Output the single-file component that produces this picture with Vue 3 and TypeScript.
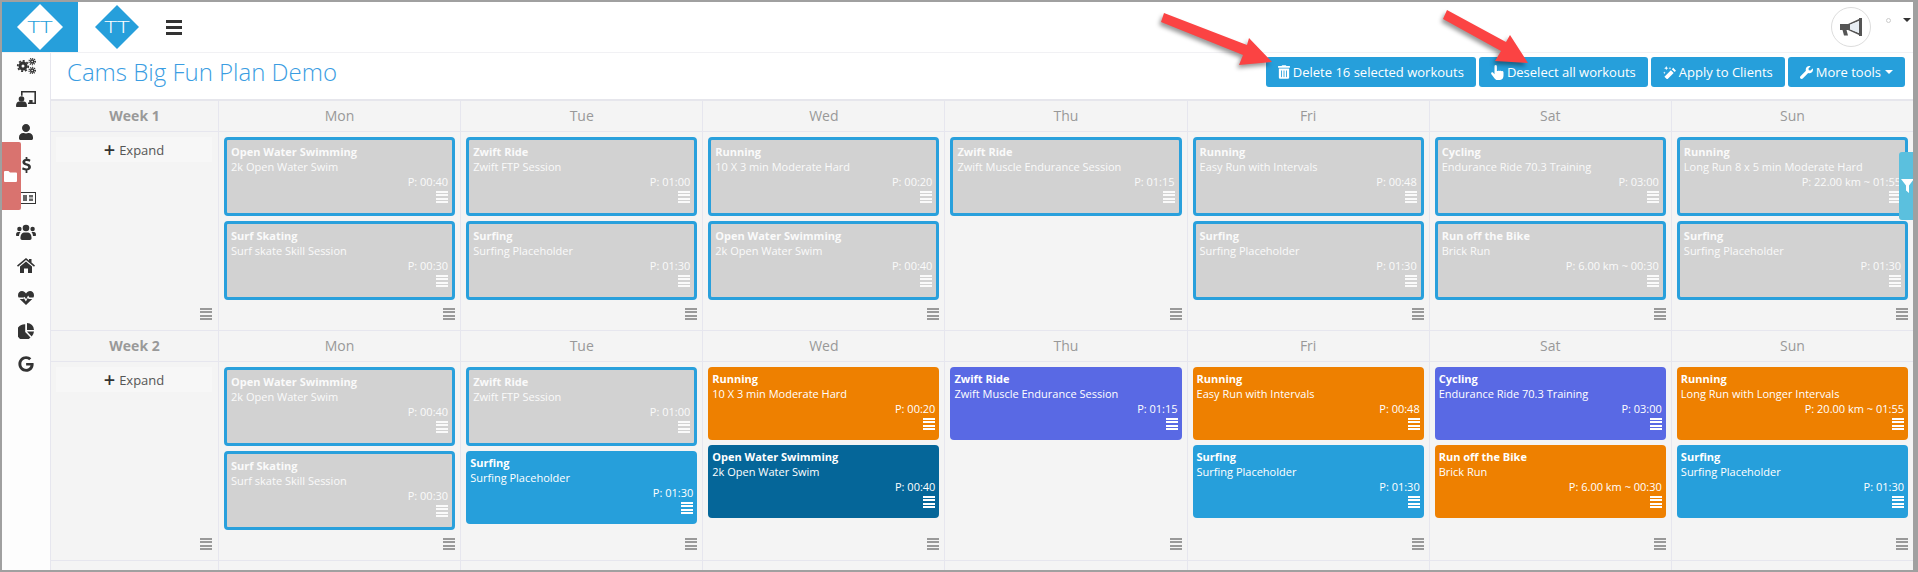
<script setup lang="ts">
type Kind = 'sel' | 'run' | 'ride' | 'surf' | 'swim'
interface Workout { title: string; sub: string; plan: string }

const ows: Workout = { title: 'Open Water Swimming', sub: '2k Open Water Swim', plan: 'P: 00:40' }
const skate: Workout = { title: 'Surf Skating', sub: 'Surf skate Skill Session', plan: 'P: 00:30' }
const ftp: Workout = { title: 'Zwift Ride', sub: 'Zwift FTP Session', plan: 'P: 01:00' }
const surf: Workout = { title: 'Surfing', sub: 'Surfing Placeholder', plan: 'P: 01:30' }
const tenBy3: Workout = { title: 'Running', sub: '10 X 3 min Moderate Hard', plan: 'P: 00:20' }
const muscle: Workout = { title: 'Zwift Ride', sub: 'Zwift Muscle Endurance Session', plan: 'P: 01:15' }
const easy: Workout = { title: 'Running', sub: 'Easy Run with Intervals', plan: 'P: 00:48' }
const endurance: Workout = { title: 'Cycling', sub: 'Endurance Ride 70.3 Training', plan: 'P: 03:00' }
const brick: Workout = { title: 'Run off the Bike', sub: 'Brick Run', plan: 'P: 6.00 km ~ 00:30' }
const long1: Workout = { title: 'Running', sub: 'Long Run 8 x 5 min Moderate Hard', plan: 'P: 22.00 km ~ 01:55' }
const long2: Workout = { title: 'Running', sub: 'Long Run with Longer Intervals', plan: 'P: 20.00 km ~ 01:55' }

const dayNames = ['Mon', 'Tue', 'Wed', 'Thu', 'Fri', 'Sat', 'Sun']

const weeks: { name: string; days: [Workout, Kind][][] }[] = [
  {
    name: 'Week 1',
    days: [
      [[ows, 'sel'], [skate, 'sel']],
      [[ftp, 'sel'], [surf, 'sel']],
      [[tenBy3, 'sel'], [ows, 'sel']],
      [[muscle, 'sel']],
      [[easy, 'sel'], [surf, 'sel']],
      [[endurance, 'sel'], [brick, 'sel']],
      [[long1, 'sel'], [surf, 'sel']],
    ],
  },
  {
    name: 'Week 2',
    days: [
      [[ows, 'sel'], [skate, 'sel']],
      [[ftp, 'sel'], [surf, 'surf']],
      [[tenBy3, 'run'], [ows, 'swim']],
      [[muscle, 'ride']],
      [[easy, 'run'], [surf, 'surf']],
      [[endurance, 'ride'], [brick, 'run']],
      [[long2, 'run'], [surf, 'surf']],
    ],
  },
]

const gear = (cx: number, cy: number, r: number, w: number, dash: string) =>
  `<circle cx="${cx}" cy="${cy}" r="${r}" fill="none" stroke="currentColor" stroke-width="${w}"/>` +
  `<circle cx="${cx}" cy="${cy}" r="${r + w / 2 + 0.7}" fill="none" stroke="currentColor" stroke-width="1.8" stroke-dasharray="${dash}"/>`

const sideIcons: { w: number; h: number; vb: string; body: string }[] = [
  { w: 20, h: 16, vb: '0 0 20 16', body: gear(7, 8, 3, 3, '2 1.93') + gear(16.2, 3.5, 1.5, 1.4, '1 .9') + gear(16.2, 12.5, 1.5, 1.4, '1 .9') },
  { w: 20, h: 16, vb: '0 0 20 16', body: '<circle cx="5.5" cy="8" r="2.8"/><path d="M0 15c0-3 1.6-4.4 3.2-4.4h4.6c1.6 0 3.2 1.4 3.2 4.4 0 .6-.4 1-1 1H1c-.6 0-1-.4-1-1z"/><path d="M5 0h15v13h-8v-1.6h1.2V9h3.4v2.4h1.8V1.6H6.600v3.200H5z"/>' },
  { w: 14, h: 16, vb: '0 0 448 512', body: '<path d="M224 256c70.7 0 128-57.300 128-128S294.700 0 224 0 96 57.300 96 128s57.300 128 128 128zm89.600 32h-16.700c-22.200 10.200-46.900 16-72.900 16s-50.600-5.800-72.900-16h-16.700C60.200 288 0 348.200 0 422.400V464c0 26.500 21.500 48 48 48h352c26.500 0 48-21.500 48-48v-41.600c0-74.200-60.200-134.400-134.400-134.400z"/>' },
  { w: 9, h: 16, vb: '0 0 10 18', body: '<path d="M4 0h2v2.100c1.400.1 2.600.5 3.500 1l-.8 2.200c-1-.5-2.200-.9-3.400-.9-1.200 0-1.900.5-1.900 1.200 0 .8.900 1.200 2.500 1.800C8.600 8.200 10 9.200 10 11.300c0 2-1.500 3.400-4 3.700V18H4v-2.900c-1.500-.1-3-.6-4-1.300l.9-2.200c1.100.7 2.500 1.200 3.800 1.200 1.300 0 2.200-.5 2.200-1.400 0-.8-.8-1.300-2.400-1.800C2 8.800.4 7.800.4 5.700.4 3.800 1.800 2.500 4 2.200z"/>' },
  { w: 16, h: 12, vb: '0 0 16 12', body: '<path fill-rule="evenodd" d="M0 0h16v12H0zM1 1v10h14V1z"/><path d="M3 3h4v6H3zM9 3h4v2.500H9zM9 6.500h4V9H9z" opacity=".75"/>' },
  { w: 20, h: 16, vb: '0 0 20 16', body: '<circle cx="10" cy="4" r="3.300"/><circle cx="3.400" cy="5" r="2.200"/><circle cx="16.600" cy="5" r="2.200"/><path d="M4.400 14c0-3.400 1.800-5.500 3.400-5.500h4.400c1.600 0 3.400 2.100 3.400 5.500 0 1.300-.7 2-1.700 2H6.100c-1 0-1.700-.7-1.700-2z"/><path d="M0 11c0-2 .8-3 2-3h2.600C3.600 9 3.200 10 3 12H1c-.6 0-1-.4-1-1zM20 11c0-2-.8-3-2-3h-2.600c1 1 1.400 2 1.600 4h2c.6 0 1-.4 1-1z"/>' },
  { w: 18, h: 15, vb: '0 0 18 15', body: '<path d="M9 0l3 2.500V1h2.500v3.600L18 7.500l-1 1.200L9 2 1 8.700 0 7.500z"/><path d="M9 3.500l6 5V15h-4v-4.500H7V15H3V8.500z"/>' },
  { w: 16, h: 14, vb: '0 0 16 14', body: '<path d="M8 2.400C9 .9 10.300 0 12 0c2.400 0 4 1.900 4 4.200 0 .9-.2 1.600-.6 2.300h-4l-1.300-2-2 3.700-1.500-2.500-.8.800H.6C.2 5.800 0 5.100 0 4.200 0 1.900 1.600 0 4 0c1.700 0 3 .9 4 2.400z"/><path d="M1.700 8h3.500l.7-.7 2 3.200 2-3.700.7 1.200h3.700L8 14z"/>' },
  { w: 16, h: 16, vb: '0 0 16 16', body: '<path d="M7.200 1.200V9l5.300 5.500A8 8 0 1 1 7.200 1.200z"/><path d="M9 0a7 7 0 0 1 7 7H9z"/><path d="M9 8.600h7a8 8 0 0 1-2.300 4.800z"/>' },
  { w: 16, h: 16, vb: '0 0 488 512', body: '<path d="M488 261.800C488 403.300 391.100 504 248 504 110.800 504 0 393.200 0 256S110.800 8 248 8c66.800 0 123 24.500 166.300 64.900l-67.500 64.900C258.500 52.600 94.300 116.600 94.300 256c0 86.500 69.100 156.600 153.700 156.600 98.200 0 135-70.400 140.800-106.900H248v-85.300h236.100c2.300 12.700 3.900 24.900 3.900 41.400z"/>' },
]
</script>

<template>
  <div class="frame">
    <header class="topbar">
      <div class="logo-box">
        <svg width="46" height="46" viewBox="0 0 46 46">
          <polygon points="23,0 46,23 23,46 0,23" fill="#fff" />
          <text x="23" y="29" text-anchor="middle" textLength="25" lengthAdjust="spacingAndGlyphs" class="logo-text" fill="#269fdb">TT</text>
        </svg>
      </div>
      <svg class="logo-two" width="44" height="44" viewBox="0 0 44 44">
        <polygon points="22,0 44,22 22,44 0,22" fill="#269fdb" />
        <text x="22" y="28" text-anchor="middle" textLength="25" lengthAdjust="spacingAndGlyphs" class="logo-text" fill="#fff">TT</text>
      </svg>
      <div class="burger"><i /><i /><i /></div>
      <div class="spacer" />
      <div class="round-btn">
        <svg width="22" height="18" viewBox="0 0 22 18" fill="#555">
          <path fill-rule="evenodd" d="M0 6h8L19 1V0h3v18h-3v-1L8 12H6.500L8 17.500H4L2.500 12H0zM10 6.800v4.400l9 3.800V3z" />
          <path d="M10 6.800v4.400l9 3.800V3z" fill="#e8eef4" />
        </svg>
      </div>
      <span class="user-dot" />
      <span class="user-caret" />
    </header>

    <div class="main">
      <nav class="sidebar">
        <svg
          v-for="(ic, i) in sideIcons"
          :key="i"
          :width="ic.w"
          :height="ic.h"
          :viewBox="ic.vb"
          class="side-icon"
          v-html="ic.body"
        />
      </nav>

      <section class="content">
        <div class="titlebar">
          <h1 class="title">Cams Big Fun Plan Demo</h1>
          <div class="tools">
            <button class="btn">
              <svg width="12" height="14" viewBox="0 0 448 512" fill="currentColor"><path d="M32 464a48 48 0 0 0 48 48h288a48 48 0 0 0 48-48V128H32zm272-256a16 16 0 0 1 32 0v224a16 16 0 0 1-32 0zm-96 0a16 16 0 0 1 32 0v224a16 16 0 0 1-32 0zm-96 0a16 16 0 0 1 32 0v224a16 16 0 0 1-32 0zM432 32H312l-9.400-18.700A24 24 0 0 0 281.100 0H166.800a23.720 23.720 0 0 0-21.400 13.300L136 32H16A16 16 0 0 0 0 48v32a16 16 0 0 0 16 16h416a16 16 0 0 0 16-16V48a16 16 0 0 0-16-16z" /></svg>
              Delete 16 selected workouts
            </button>
            <button class="btn">
              <svg width="13" height="15" viewBox="0 0 13 15" fill="currentColor"><path d="M3.500 1.200a1.200 1.200 0 0 1 2.400 0V6h.9c.3-.5 1.400-.5 1.700 0 .4-.4 1.400-.4 1.700.2.500-.3 2.300-.3 2.300 1.300v3.300c0 2.200-1.200 4.200-3.500 4.200H6.200c-1.200 0-2-.6-2.600-1.500L.4 9.200c-.9-1.300.8-2.500 1.800-1.400l1.300 1.500z" /></svg>
              Deselect all workouts
            </button>
            <button class="btn">
              <svg width="13" height="13" viewBox="0 0 14 14" fill="currentColor"><path d="M9.500 3.500l1.500-1.500 3 3-1.500 1.500zM8.500 4.500l3 3L4.500 14.500l-3-3z" /><path d="M3.500 0l.7 1.600 1.600.7-1.600.7-.7 1.600-.7-1.600-1.600-.7 1.600-.7zM7.500 1l.4.900.9.400-.9.400-.4.900-.4-.9-.9-.4.900-.4zM1.500 6l.4.900.9.400-.9.400-.4.900-.4-.9-.9-.4.900-.4z" /></svg>
              Apply to Clients
            </button>
            <button class="btn">
              <svg width="13" height="13" viewBox="0 0 512 512" fill="currentColor"><path d="M507.730 109.100c-2.240-9.030-13.540-12.090-20.120-5.510l-74.360 74.360-67.880-11.310-11.310-67.880 74.360-74.360c6.620-6.620 3.430-17.900-5.660-20.160-47.380-11.740-99.550.91-136.580 37.930-39.640 39.640-50.550 97.100-34.050 147.200L18.740 402.760c-24.990 24.990-24.990 65.510 0 90.500 24.990 24.990 65.510 24.990 90.500 0l213.210-213.210c50.120 16.710 107.470 5.680 147.370-34.220 37.070-37.070 49.700-89.320 37.910-136.730z" /></svg>
              More tools
              <span class="caret" />
            </button>
          </div>
        </div>

        <div class="grid">
          <template v-for="week in weeks" :key="week.name">
            <div class="head week-name">{{ week.name }}</div>
            <div v-for="d in dayNames" :key="d" class="head day-name">{{ d }}</div>

            <div class="cell week-cell">
              <div class="expand"><span class="plus">+</span> Expand</div>
              <span class="bars cell-bars" />
            </div>
            <div v-for="(cards, di) in week.days" :key="di" class="cell day-cell">
              <article
                v-for="(c, ci) in cards"
                :key="ci"
                class="card"
                :class="'-' + c[1]"
              >
                <div class="card-title">{{ c[0].title }}</div>
                <div class="card-sub">{{ c[0].sub }}</div>
                <div class="card-plan">{{ c[0].plan }}</div>
                <span class="bars card-bars" />
              </article>
              <span class="bars cell-bars" />
            </div>
          </template>
          <div class="tail" />
          <div v-for="d in dayNames" :key="'t' + d" class="tail day-tail" />
        </div>
      </section>
    </div>

    <!-- highlight pasted over the sidebar in the screenshot -->
    <div class="side-mark">
      <svg width="13" height="11" viewBox="0 0 13 11" fill="#fff"><path d="M0 1a1 1 0 0 1 1-1h3.500l1.500 1.500h6a1 1 0 0 1 1 1V10a1 1 0 0 1-1 1H1a1 1 0 0 1-1-1z" /></svg>
    </div>

    <div class="filter-tab">
      <svg width="13" height="14" viewBox="0 0 13 14" fill="#fff"><path d="M0 0h13L8 6.500V14L5 11.500V6.500z" /></svg>
    </div>

    <svg class="arrows" width="1918" height="100" viewBox="0 0 1918 100" fill="#fb4343">
      <polygon points="1164,13 1247,45 1249,38 1272,62 1239,65 1243,55 1161,22" />
      <polygon points="1447,10 1506,42 1510,35 1528,63 1495,61 1501,51 1443,19" />
    </svg>
  </div>
</template>

<style>
html, body { margin: 0; background: #fff; overflow: hidden; }
</style>

<style scoped>
.frame {
  position: relative;
  box-sizing: border-box;
  width: 1918px;
  height: 572px;
  border: solid #a0a0a0;
  border-width: 2px 5px 2px 2px;
  display: flex;
  flex-direction: column;
  overflow: hidden;
  background: #fff;
  font-family: "Open Sans", "Liberation Sans", sans-serif;
}
.topbar {
  height: 51px;
  flex: none;
  display: flex;
  align-items: center;
  border-bottom: 1px solid #f1f1f4;
  box-sizing: border-box;
}
.logo-box {
  width: 76px;
  height: 50px;
  align-self: flex-start;
  background: #269fdb;
  display: flex;
  align-items: center;
  justify-content: center;
}
.logo-two { margin-left: 17px; }
.logo-text { font-size: 17px; font-weight: 300; }
.burger { margin-left: 27px; width: 16px; display: flex; flex-direction: column; gap: 3px; }
.burger i { display: block; height: 3px; background: #333; }
.spacer { flex: 1; }
.round-btn {
  width: 40px;
  height: 40px;
  box-sizing: border-box;
  border: 1px solid #ddd;
  border-radius: 50%;
  display: flex;
  align-items: center;
  justify-content: center;
  margin-right: 15px;
}
.user-dot { width: 3px; height: 3px; border: 1px solid #ccc; border-radius: 50%; margin: -14px 12px 0 0; }
.user-caret { border: 4px solid transparent; border-top-color: #333; border-bottom: 0; margin: -14px 2px 0 0; }
.main { flex: 1; display: flex; min-height: 0; }
.sidebar {
  width: 48px;
  flex: none;
  box-sizing: content-box;
  border-right: 1px solid #e6e6ee;
  background: #fdfdfd;
  display: flex;
  flex-direction: column;
  align-items: center;
  color: #333;
}
.side-icon {
  display: block;
  fill: currentColor;
  flex: none;
}
.side-icon:nth-child(1) { margin-top: 5px; }
.side-icon:nth-child(2) { margin-top: 17px; }
.side-icon:nth-child(3) { margin-top: 17px; }
.side-icon:nth-child(4) { margin-top: 17px; }
.side-icon:nth-child(5) { margin-top: 19px; margin-left: 4px; }
.side-icon:nth-child(6) { margin-top: 20px; }
.side-icon:nth-child(7) { margin-top: 18px; }
.side-icon:nth-child(8) { margin-top: 18px; }
.side-icon:nth-child(9) { margin-top: 18px; }
.side-icon:nth-child(10) { margin-top: 17px; }
.content { flex: 1; min-width: 0; display: flex; flex-direction: column; }
.titlebar {
  height: 48px;
  flex: none;
  box-sizing: border-box;
  border-bottom: 2px solid #e6e6ec;
  display: flex;
  align-items: flex-start;
  justify-content: space-between;
  padding: 4px 8px 0 16px;
}
.title {
  margin: -1px 0 0;
  font-size: 24px;
  font-weight: 300;
  line-height: 32px;
  color: #3a9de2;
}
.tools { display: flex; gap: 3px; }
.btn {
  height: 30px;
  padding: 0 12px;
  border: 0;
  border-radius: 3px;
  background: #269fdb;
  color: #fff;
  font: 13px "Open Sans", "Liberation Sans", sans-serif;
  display: flex;
  align-items: center;
  gap: 3px;
  white-space: nowrap;
}
.caret { border: 4px solid transparent; border-top-color: #fff; border-bottom: 0; margin-left: 1px; }
.grid {
  flex: 1;
  display: grid;
  grid-template-columns: 167px repeat(7, 1fr);
  grid-template-rows: 31px 199px 31px 199px 1fr;
  background: #f4f4f4;
}
.head {
  box-sizing: border-box;
  display: flex;
  align-items: center;
  justify-content: center;
  border-bottom: 1px solid #e6e6ee;
  padding-bottom: 1px;
  font-size: 14px;
  color: #999;
}
.week-name { font-weight: 700; }
.day-name, .day-cell, .day-tail { border-left: 1px solid #e6e6ee; }
.cell {
  position: relative;
  box-sizing: border-box;
  border-bottom: 1px solid #e6e6ee;
  display: flex;
  flex-direction: column;
  gap: 5px;
  padding: 5px 5px 10px;
  min-width: 0;
}
.week-cell { padding-left: 5px; padding-right: 6px; }
.expand {
  height: 25px;
  background: #f7f7f7;
  display: flex;
  align-items: center;
  justify-content: center;
  gap: 4px;
  font-size: 13px;
  color: #555;
}
.plus { font-size: 20px; line-height: 20px; color: #333; font-weight: 600; }
.card {
  box-sizing: border-box;
  height: 73px;
  flex: none;
  padding: 4px 4px 0;
  border-radius: 4px;
  color: #fff;
  font-size: 11px;
  line-height: 15px;
  display: flex;
  flex-direction: column;
  overflow: hidden;
  white-space: nowrap;
}
.card.-sel {
  height: 79px;
  background: #d2d2d2;
  border: 3px solid #29a0dc;
  color: #fafafa;
}
.card.-run { background: #ee8000; }
.card.-ride { background: #5969e4; }
.card.-surf { background: #269fdb; }
.card.-swim { background: #056699; }
.card-title { font-weight: 700; }
.card-plan { text-align: right; }
.bars {
  display: block;
  flex: none;
  width: 12px;
  height: 12px;
  background: repeating-linear-gradient(to bottom, currentColor 0 2px, transparent 2px 3.34px);
}
.card-bars { align-self: flex-end; margin-top: 2px; }
.cell-bars { margin-top: auto; align-self: flex-end; color: #999; }
.tail { min-height: 0; }
.side-mark {
  position: absolute;
  left: 0;
  top: 140px;
  width: 19px;
  height: 68px;
  background: #d9736f;
  border-radius: 0 2px 2px 0;
}
.side-mark svg { position: absolute; left: 2px; top: 29px; }
.filter-tab {
  position: absolute;
  right: -3px;
  top: 150px;
  width: 17px;
  height: 68px;
  background: #5bc0de;
  border-radius: 3px 0 0 3px;
  display: flex;
  align-items: center;
  justify-content: center;
}
.arrows {
  position: absolute;
  left: -2px;
  top: -2px;
  pointer-events: none;
  filter: drop-shadow(-2px 3px 2px rgba(0, 0, 0, .4));
}
</style>
